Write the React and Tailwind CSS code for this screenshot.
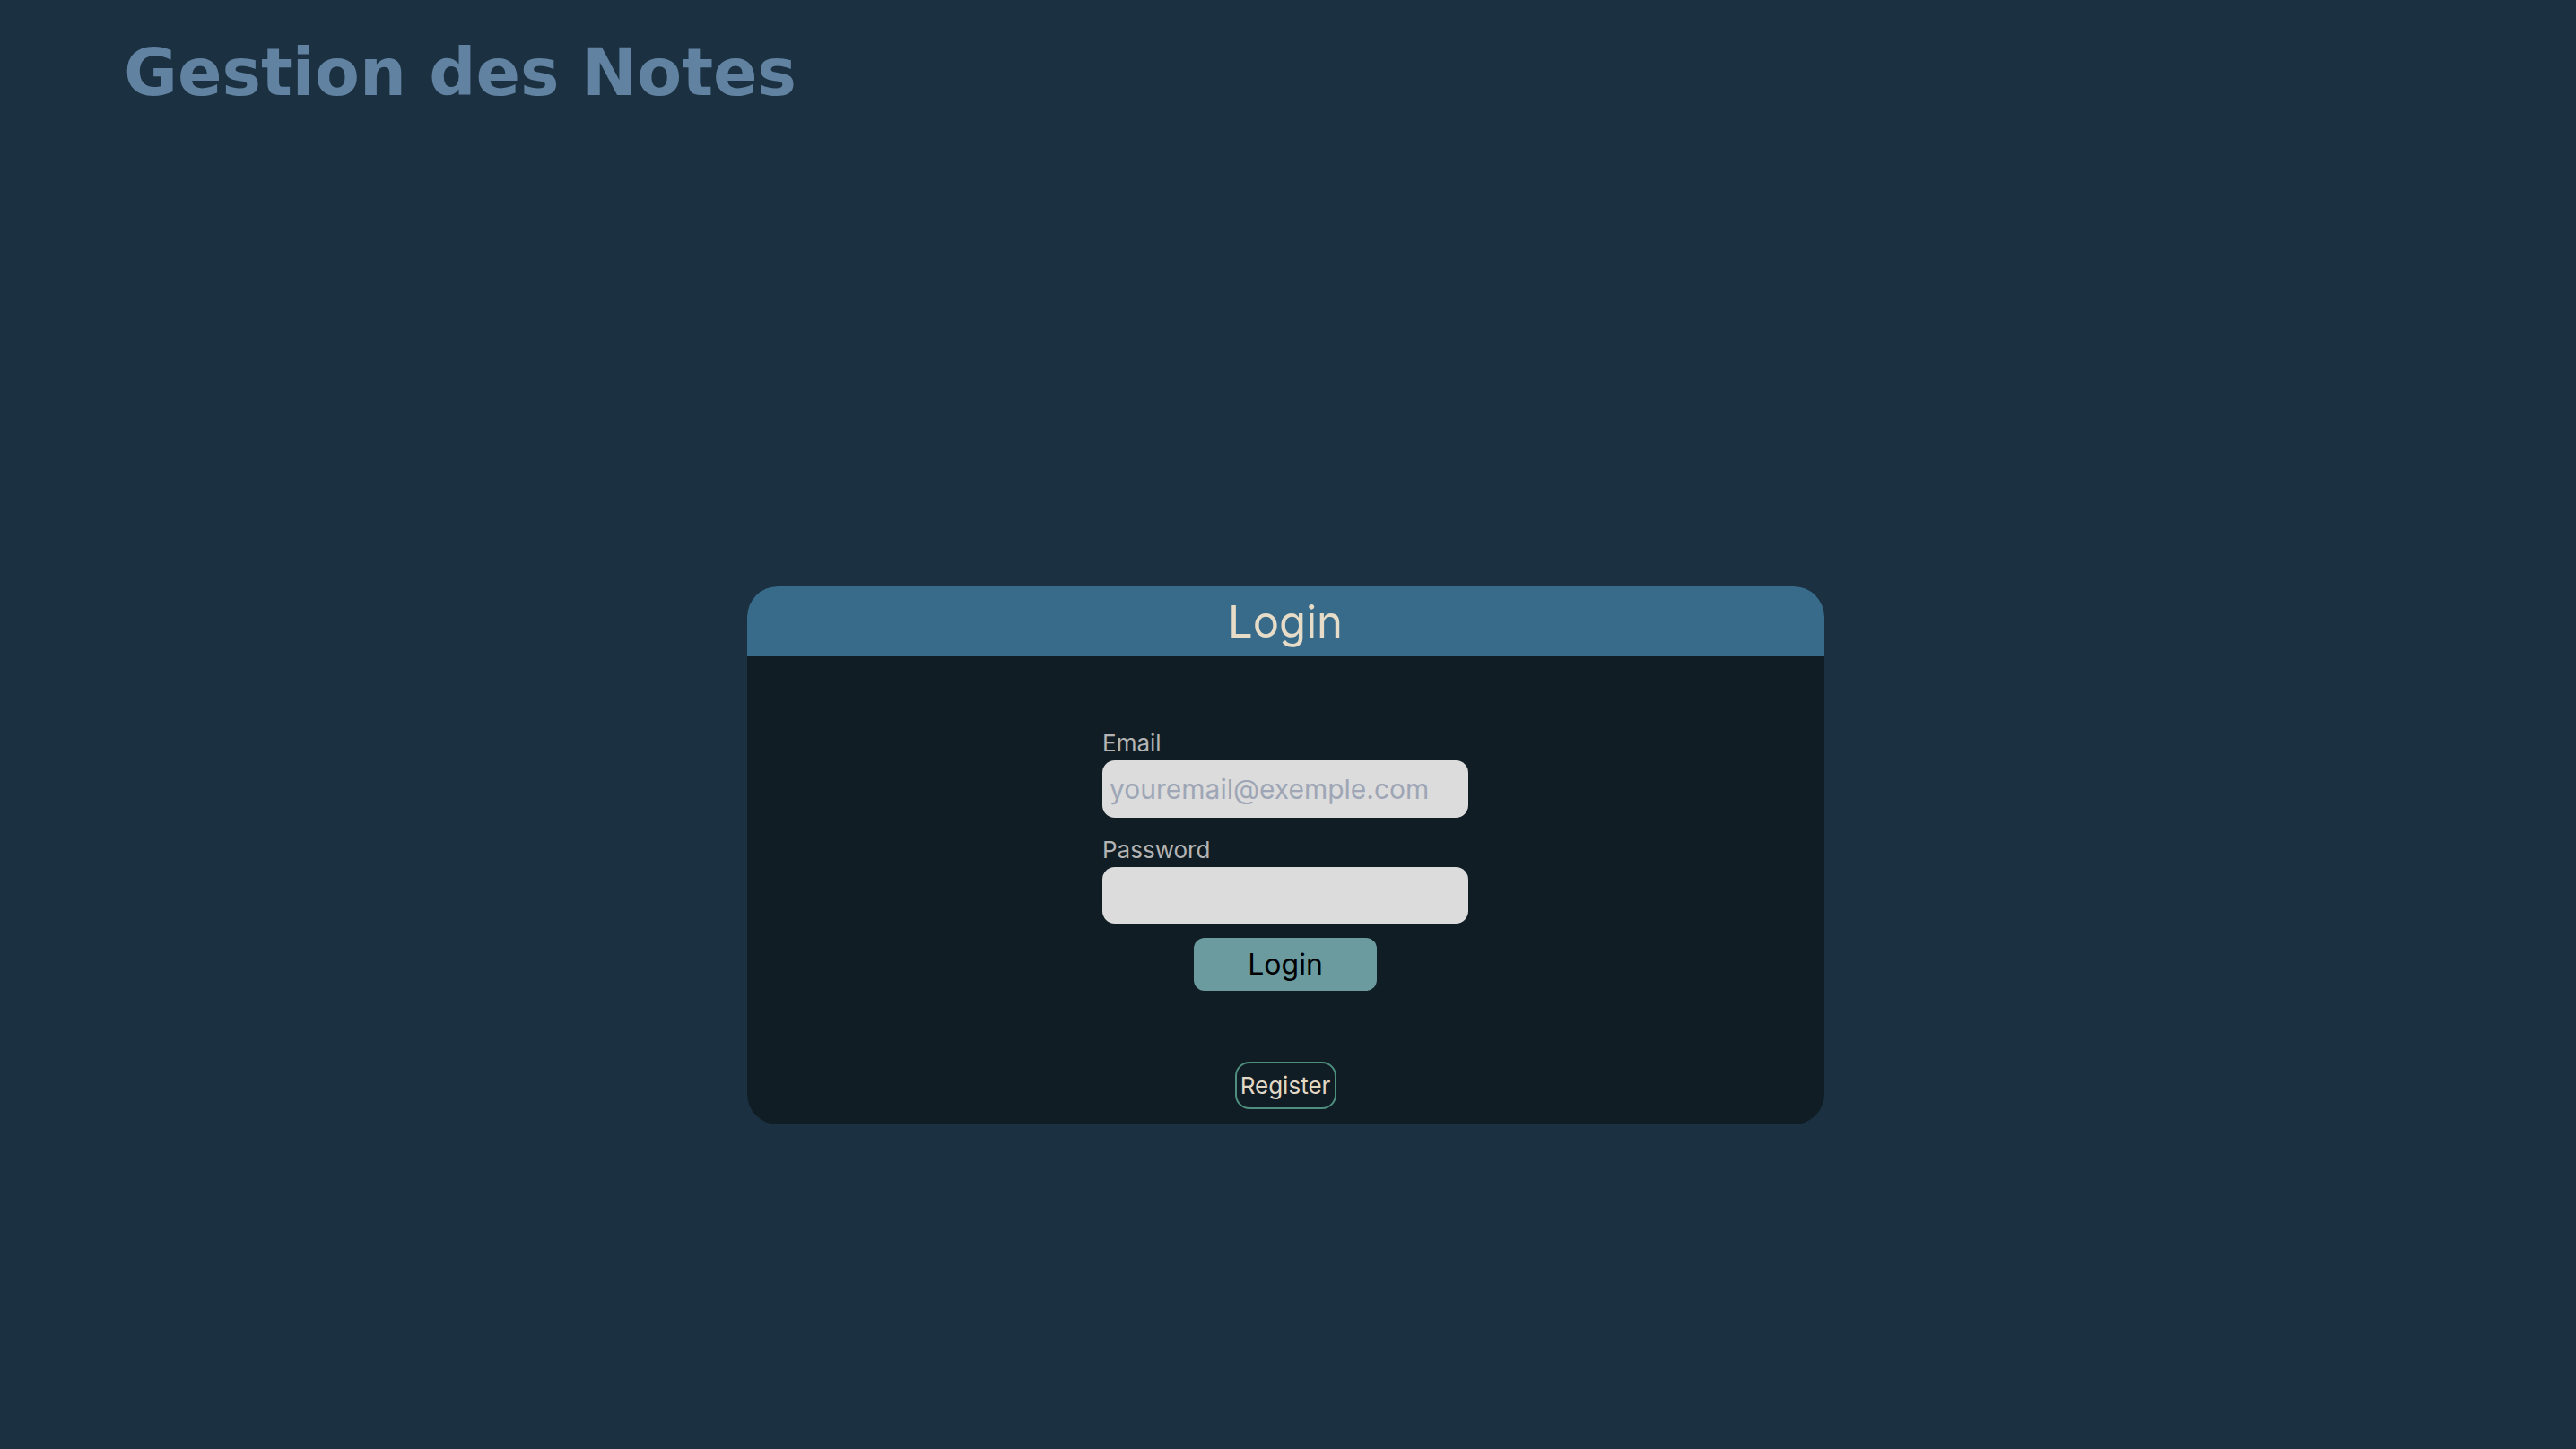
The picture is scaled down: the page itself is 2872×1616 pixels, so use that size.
export default function App() {
  return (
    <div className="min-h-screen w-full bg-[#1b3040] flex flex-col">
      <h1 className="pl-[138px] pt-[44px] text-[73px] leading-none font-bold text-[#6182a0] [font-family:'DejaVu_Sans',Verdana,sans-serif]">
        Gestion des Notes
      </h1>
      <div className="flex justify-center mt-[537px] pr-[6px]">
        <div className="w-[1201px] rounded-[34px] overflow-hidden bg-[#101d25] [font-family:Inter,'Noto_Sans',sans-serif]">
          <div className="h-[78px] bg-[#386a8a] flex items-center justify-center">
            <span className="text-[49px] leading-none text-[#e6dcc8]">Login</span>
          </div>
          <div className="flex flex-col items-center pt-[81px] pb-[17px]">
            <div className="w-[408px] flex flex-col">
              <label className="text-[26px] leading-[31px] text-[#b4b4b4] mb-[4px]">Email</label>
              <input
                type="email"
                placeholder="youremail@exemple.com"
                className="h-[64px] w-full rounded-[14px] bg-[#dcdcdc] px-[8px] text-[30px] text-black placeholder:text-[#9ea6b6] outline-none"
              />
              <label className="mt-[20px] text-[26px] leading-[31px] text-[#b4b4b4] mb-[4px]">Password</label>
              <input
                type="password"
                className="h-[63px] w-full rounded-[14px] bg-[#dcdcdc] px-[8px] text-[30px] text-black outline-none"
              />
              <div className="flex justify-center mt-[16px]">
                <button className="w-[204px] h-[59px] rounded-[12px] bg-[#6b9b9e] text-[32px] leading-none text-black">
                  Login
                </button>
              </div>
            </div>
            <button className="mt-[79px] w-[113px] h-[53px] rounded-[16px] border-[2px] border-[#4e8f7e] text-[26px] leading-none text-[#e2d8c6]">
              Register
            </button>
          </div>
        </div>
      </div>
    </div>
  );
}
